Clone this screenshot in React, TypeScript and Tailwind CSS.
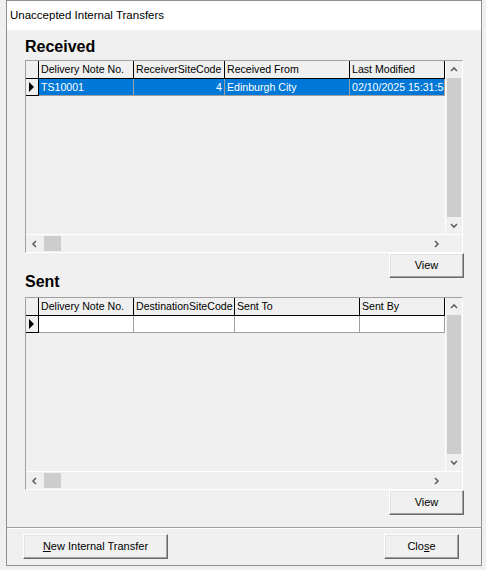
import * as React from "react";

type Col = { label: string; w: string; right?: boolean };
type Row = { cells: string[]; selected?: boolean };

const receivedCols: Col[] = [
  { label: "Delivery Note No.", w: "w-[95px]" },
  { label: "ReceiverSiteCode", w: "w-[91px]", right: true },
  { label: "Received From", w: "w-[125px]" },
  { label: "Last Modified", w: "w-[95px]" },
];

const sentCols: Col[] = [
  { label: "Delivery Note No.", w: "w-[95px]" },
  { label: "DestinationSiteCode", w: "w-[101px]" },
  { label: "Sent To", w: "w-[125px]" },
  { label: "Sent By", w: "w-[85px]" },
];

const Chevron = ({ dir }: { dir: "up" | "down" | "left" | "right" }) => {
  const pts = {
    up: "1,5 4,2 7,5",
    down: "1,2 4,5 7,2",
    left: "5,1 2,4 5,7",
    right: "2,1 5,4 2,7",
  }[dir];
  return (
    <svg width="8" height="8" viewBox="0 0 8 8">
      <polyline points={pts} fill="none" stroke="#606060" strokeWidth="1.6" />
    </svg>
  );
};

const RowMarker = () => (
  <svg width="5" height="10" viewBox="0 0 5 10">
    <polygon points="0,0 5,5 0,10" fill="#000" />
  </svg>
);

function DataGrid({ cols, rows }: { cols: Col[]; rows: Row[] }) {
  return (
    <div className="w-[438px] h-[193px] flex flex-col border border-t-[#a0a0a0] border-l-[#a0a0a0] border-r-white border-b-white">
      <div className="h-[174px] flex border-b border-white">
        <div className="w-[419px] flex flex-col overflow-hidden bg-[#f0f0f0] text-[10.6px]">
          {/* column headers */}
          <div className="h-[18px] flex border-b border-black bg-[#f0f0f0]">
            <div className="w-[13px] border-r border-black" />
            {cols.map((c) => (
              <div key={c.label} className={`${c.w} shrink-0 border-r border-black pl-[2px] pt-[1px] flex items-center whitespace-nowrap overflow-hidden`}>
                {c.label}
              </div>
            ))}
          </div>
          {rows.map((r, i) => (
            <div key={i} className="h-[17px] flex">
              <div className="w-[13px] shrink-0 border-r border-b border-black bg-[#f0f0f0] pl-[3px] flex items-center">
                <RowMarker />
              </div>
              {cols.map((c, j) => (
                <div
                  key={c.label}
                  className={`${c.w} shrink-0 border-r border-b border-[#a0a0a0] px-[2px] pt-[1px] flex items-center whitespace-nowrap overflow-hidden ${
                    c.right ? "justify-end" : ""
                  } ${r.selected ? "bg-[#0078d7] text-white" : "bg-white"}`}
                >
                  {r.cells[j]}
                </div>
              ))}
            </div>
          ))}
        </div>
        {/* vertical scrollbar */}
        <div className="w-[17px] flex flex-col border-l border-white bg-[#f0f0f0]">
          <div className="h-[17px] flex items-center justify-center">
            <Chevron dir="up" />
          </div>
          <div className="flex-1 mx-[1px] bg-[#cdcdcd]" />
          <div className="h-[17px] flex items-center justify-center">
            <Chevron dir="down" />
          </div>
        </div>
      </div>
      {/* horizontal scrollbar */}
      <div className="h-[17px] flex bg-[#f0f0f0]">
        <div className="w-[17px] flex items-center justify-center">
          <Chevron dir="left" />
        </div>
        <div className="ml-[1px] my-[1px] w-[17px] bg-[#cdcdcd]" />
        <div className="flex-1" />
        <div className="w-[17px] flex items-center justify-center">
          <Chevron dir="right" />
        </div>
        <div className="w-[17px]" />
      </div>
    </div>
  );
}

function Btn({ className, children }: { className: string; children: React.ReactNode }) {
  return (
    <button
      className={`h-[25px] bg-[#f0f0f0] border border-t-white border-l-white border-r-[#696969] border-b-[#696969] shadow-[inset_-1px_-1px_0_#a0a0a0,inset_1px_1px_0_#e3e3e3] text-[11px] text-black flex items-center justify-center ${className}`}
    >
      {children}
    </button>
  );
}

export default function App() {
  return (
    <div className="w-[486px] h-[570px] bg-[#f0f0f0] font-['Liberation_Sans',Arial,sans-serif] text-black overflow-hidden">
      <div className="ml-[6px] w-[476px] h-[566px] border border-[#8f8f8f] flex flex-col">
        <div className="h-[29px] bg-white flex items-center pl-[3px] pt-[1px] text-[11.5px]">Unaccepted Internal Transfers</div>

        <div className="pl-[18px] pr-[17px] flex flex-col">
          <h2 className="mt-[8px] mb-[4px] h-[18px] leading-[18px] text-[16px] font-bold">Received</h2>
          <DataGrid cols={receivedCols} rows={[{ cells: ["TS10001", "4", "Edinburgh City", "02/10/2025 15:31:58"], selected: true }]} />

          <div className="h-[44px] flex items-start">
            <h2 className="mt-[20px] h-[18px] leading-[18px] text-[16px] font-bold">Sent</h2>
            <Btn className="ml-auto w-[75px]">View</Btn>
          </div>

          <DataGrid cols={sentCols} rows={[{ cells: ["", "", "", ""] }]} />
          <div className="flex">
            <Btn className="ml-auto w-[75px]">View</Btn>
          </div>
        </div>

        <div className="mt-[12px] h-[2px] border-t border-[#a0a0a0] border-b border-b-white" />

        <div className="mt-[5px] pl-[16px] pr-[22px] flex">
          <Btn className="w-[145px]">
            <span>
              <u>N</u>ew Internal Transfer
            </span>
          </Btn>
          <Btn className="ml-auto w-[75px]">
            <span>
              Clo<u>s</u>e
            </span>
          </Btn>
        </div>
      </div>
    </div>
  );
}
